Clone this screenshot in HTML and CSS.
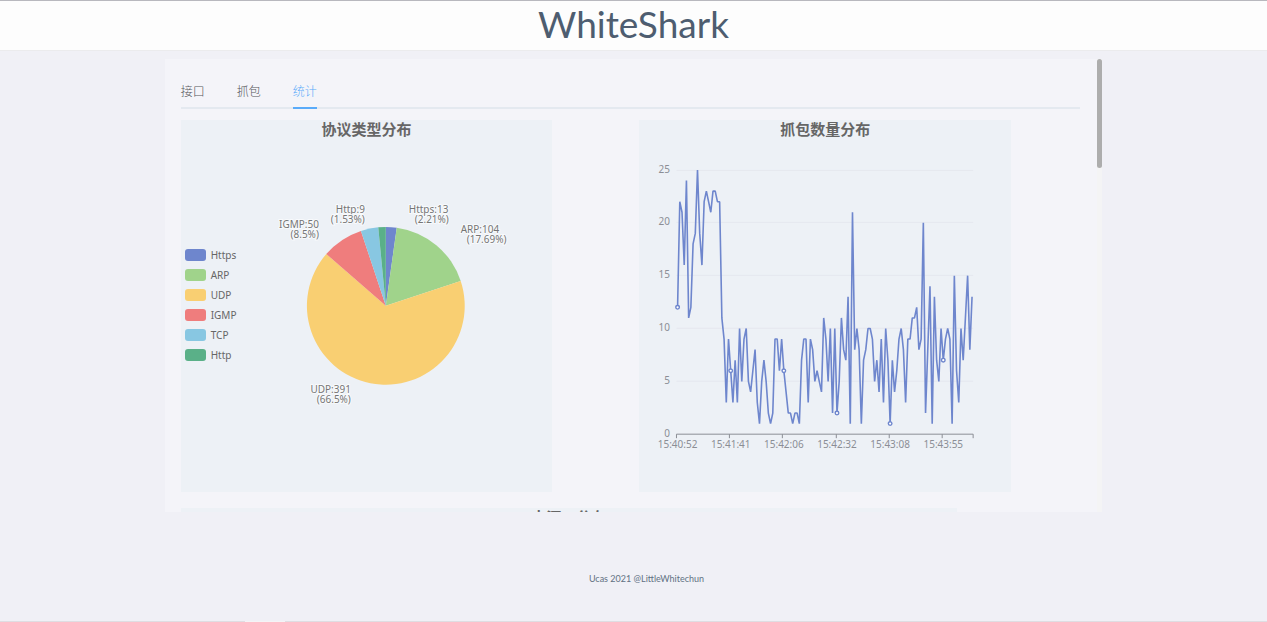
FILE: index.html
```html
<!DOCTYPE html>
<html lang="zh-CN">
<head>
<meta charset="utf-8">
<title>WhiteShark</title>
<link rel="stylesheet" href="styles.css">
</head>
<body>
<header class="header"><h1 class="brand">WhiteShark</h1></header>
<main class="panel">
  <div class="scroll">
    <nav class="tabs" role="tablist">
      <button class="tab" role="tab" aria-selected="false">接口</button>
      <button class="tab" role="tab" aria-selected="false">抓包</button>
      <button class="tab active" role="tab" aria-selected="true">统计</button>
    </nav>
    <div class="charts">
      <section class="card">
        <h2 class="title">协议类型分布</h2>
        <div class="pie-body">
          <ul class="legend">
            <li class="key https">Https</li>
            <li class="key arp">ARP</li>
            <li class="key udp">UDP</li>
            <li class="key igmp">IGMP</li>
            <li class="key tcp">TCP</li>
            <li class="key http">Http</li>
          </ul>
          <svg class="pie" viewBox="60 20 312 352" role="img" aria-label="协议类型分布">
            <g id="slices"></g>
            <g class="pie-label">
              <text x="184" y="93" text-anchor="end">Http:9</text>
              <text x="184" y="103" text-anchor="end">(1.53%)</text>
              <text x="138" y="108" text-anchor="end">IGMP:50</text>
              <text x="138" y="118" text-anchor="end">(8.5%)</text>
              <text x="228" y="93">Https:13</text>
              <text x="234" y="103">(2.21%)</text>
              <text x="280" y="113">ARP:104</text>
              <text x="286" y="123">(17.69%)</text>
              <text x="170" y="273" text-anchor="end">UDP:391</text>
              <text x="170" y="283" text-anchor="end">(66.5%)</text>
            </g>
          </svg>
        </div>
      </section>
      <section class="card">
        <h2 class="title">抓包数量分布</h2>
        <svg class="line" viewBox="0 20 372 352" role="img" aria-label="抓包数量分布">
          <g id="axes"></g>
          <polyline id="series" class="series"></polyline>
          <g id="marks"></g>
        </svg>
      </section>
    </div>
    <section class="card wide"><h2 class="title">来源IP分布</h2></section>
  </div>
  <div class="track"><div class="thumb"></div></div>
</main>
<footer class="footer">Ucas 2021 @LittleWhitechun</footer>
<div class="edge"><span></span><span></span></div>
<script src="charts.js"></script>
</body>
</html>
```

FILE: styles.css
```css
* { box-sizing: border-box; }
body {
  margin: 0;
  height: 100vh;
  display: flex;
  flex-direction: column;
  background: #f0f0f6;
  color: #666;
  font-family: "Noto Sans", "Noto Sans CJK SC", sans-serif;
}
.header {
  flex: none;
  height: 51px;
  border-top: 1px solid #b8b8be;
  border-bottom: 1px solid #ebebed;
  background: #fdfdfd;
  text-align: center;
}
.brand {
  margin: 0;
  color: #4e5d70;
  font: 400 37px/46px Lato, sans-serif;
}
.panel {
  position: relative;
  flex: 1;
  min-height: 0;
  width: 74%;
  margin: 8px auto 0;
  background: #f4f4f9;
}
.scroll {
  height: 100%;
  overflow: hidden;
  padding: 16px 22px 0 16px;
}
.tabs {
  display: flex;
  gap: 32px;
  height: 34px;
  border-bottom: 2px solid #e4e9f0;
}
.tab {
  height: 34px;
  padding: 0;
  border: 0;
  border-bottom: 2px solid transparent;
  background: none;
  color: #55565a;
  font: 300 12px/32px "Noto Sans CJK SC", sans-serif;
}
.tab.active {
  color: #5aabfa;
  border-color: #5aabfa;
}
.charts {
  display: grid;
  grid-template-columns: 1fr 1fr;
  margin: 11px -18px 16px 0;
}
.card {
  width: 81%;
  aspect-ratio: 1;
  display: flex;
  flex-direction: column;
  background: #edf1f6;
}
.wide {
  width: 776px;
  aspect-ratio: 2;
}
.title {
  flex: none;
  margin: 0;
  padding-bottom: 2px;
  text-align: center;
  color: #666;
  font: 700 15px/18px "Noto Sans CJK SC", sans-serif;
}
.pie-body {
  flex: 1;
  min-height: 0;
  display: flex;
}
.legend {
  flex: none;
  width: 60px;
  margin: 0;
  padding: 105px 0 0 4px;
  list-style: none;
}
.key {
  display: flex;
  align-items: center;
  gap: 5px;
  height: 20px;
  font-size: 10px;
}
.key::before {
  content: "";
  width: 21px;
  height: 12px;
  border-radius: 3px;
}
.https::before { background: #6e86cd; }
.arp::before { background: #a0d38b; }
.udp::before { background: #f9cf72; }
.igmp::before { background: #ef7d7d; }
.tcp::before { background: #88c7e2; }
.http::before { background: #5ab088; }
.pie {
  flex: 1;
  min-width: 0;
}
.line {
  flex: 1;
  min-height: 0;
}
.pie-label {
  font-size: 10px;
  fill: #757575;
  stroke: #f8fafc;
  stroke-width: 2px;
  paint-order: stroke;
}
.axis-label {
  font-size: 10px;
  fill: #8b8e95;
}
.grid-line { stroke: #e5e8ef; }
.axis-line { stroke: #8b8e95; }
.series {
  fill: none;
  stroke: #6e86cd;
  stroke-width: 1.6px;
  stroke-linejoin: bevel;
}
.mark {
  fill: #fff;
  stroke: #6e86cd;
  stroke-width: 1.4px;
}
.track {
  position: absolute;
  top: 0;
  right: 0;
  width: 5px;
  height: 100%;
  background: #f4f4f5;
}
.thumb {
  height: 24%;
  border-radius: 3px;
  background: #adadad;
}
.footer {
  flex: none;
  height: 109px;
  padding: 59px 0 0 26px;
  text-align: center;
  color: #627083;
  font: 400 9px/16px Lato, sans-serif;
}
.edge {
  flex: none;
  display: flex;
  gap: 40px;
  height: 1px;
  background: #f4f4f6;
}
.edge span { background: #dfdde2; flex: 1; }
.edge span:first-child { flex: 0 0 245px; }
```

FILE: charts.js
```javascript
const NS = "http://www.w3.org/2000/svg";
function add(parent, tag, attrs, text) {
  const el = document.createElementNS(NS, tag);
  for (const k in attrs) el.setAttribute(k, attrs[k]);
  if (text !== undefined) el.textContent = text;
  parent.appendChild(el);
}

// Protocol shares
const protocols = [[13, "#6e86cd"], [104, "#a0d38b"], [391, "#f9cf72"], [50, "#ef7d7d"], [21, "#88c7e2"], [9, "#5ab088"]];
const total = protocols.reduce((s, p) => s + p[0], 0);
const slices = document.getElementById("slices");
const cx = 205, cy = 186, r = 79;
let angle = 0;
for (const [n, fill] of protocols) {
  const next = angle + n / total * 2 * Math.PI;
  const pt = a => (cx + r * Math.sin(a)) + " " + (cy - r * Math.cos(a));
  const large = next - angle > Math.PI ? 1 : 0;
  add(slices, "path", { d: `M${cx} ${cy}L${pt(angle)}A${r} ${r} 0 ${large} 1 ${pt(next)}Z`, fill });
  angle = next;
}

// Packets captured over time
const counts = [
  12,22,21,16,24,11,12,18,19,25,19,16,22,23,22,21,23,23,22,22,11,9,3,9,
  6,3,7,3,10,5,9,10,5,4,6,8,3,1,5,7,5,2,1,2,9,9,6,9,
  6,4,2,2,1,2,2,1,7,9,9,3,9,8,5,6,5,4,11,9,5,10,2,10,
  2,5,11,8,7,13,1,21,8,10,8,1,7,8,10,10,9,5,7,4,9,3,10,7,
  1,7,4,6,9,10,8,3,9,9,11,11,12,8,9,20,2,8,14,1,13,7,5,10,
  7,9,10,9,1,15,6,3,10,7,11,15,8,13];
const times = ["15:40:52", "15:41:41", "15:42:06", "15:42:32", "15:43:08", "15:43:55"];
const left = 37.5, right = 334.5, base = 314.5, unit = 10.58;
const step = (right - left) / counts.length;
const px = i => left + (i + 0.5) * step;
const py = v => base - v * unit;
const axes = document.getElementById("axes");
for (let v = 0; v <= 25; v += 5) {
  const y = Math.floor(py(v)) + 0.5;
  if (v) add(axes, "line", { x1: left, x2: right, y1: y, y2: y, class: "grid-line" });
  add(axes, "text", { x: 31, y: y + 3, "text-anchor": "end", class: "axis-label" }, v);
}
add(axes, "line", { x1: left, x2: right, y1: base, y2: base, class: "axis-line" });
add(axes, "line", { x1: right, x2: right, y1: base, y2: base + 4, class: "axis-line" });
const marks = document.getElementById("marks");
times.forEach((t, k) => {
  const i = k * 24, x = Math.floor(left + i * step) + 0.5;
  add(axes, "line", { x1: x, x2: x, y1: base, y2: base + 4, class: "axis-line" });
  add(axes, "text", { x: px(i), y: base + 14, "text-anchor": "middle", class: "axis-label" }, t);
  add(marks, "circle", { cx: px(i), cy: py(counts[i]), r: 1.8, class: "mark" });
});
document.getElementById("series").setAttribute("points", counts.map((v, i) => px(i) + "," + py(v)).join(" "));
```
